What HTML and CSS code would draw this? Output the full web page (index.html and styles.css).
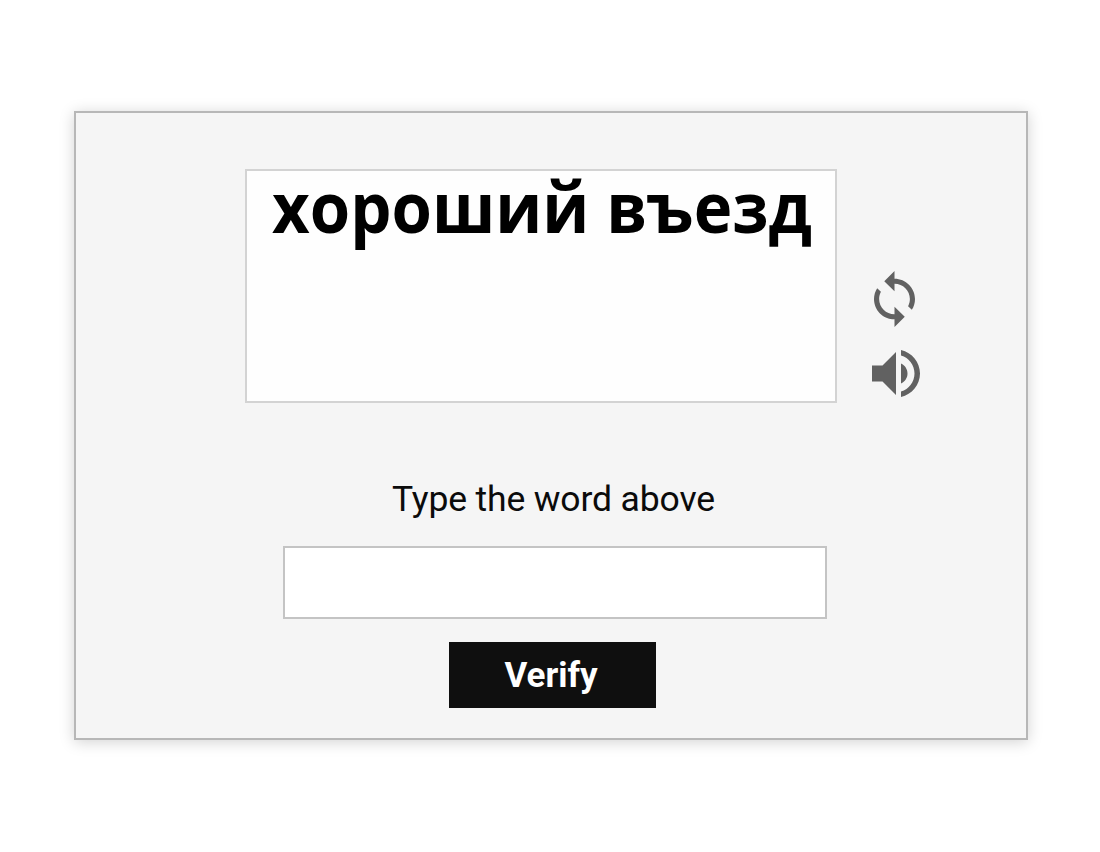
FILE: index.html
```html
<!DOCTYPE html>
<html lang="en">
<head>
<meta charset="utf-8">
<title>Verification</title>
<link rel="stylesheet" href="styles.css">
</head>
<body>
<main class="captcha">
  <div class="challenge">
    <div class="word" lang="ru"><span>хороший въезд</span></div>
    <div class="actions">
      <button class="icon" aria-label="Refresh"><svg class="refresh" viewBox="4 1 16 22" preserveAspectRatio="none"><path d="M12 4V1L8 5l4 4V6c3.31 0 6 2.69 6 6 0 1.01-.25 1.97-.7 2.8l1.46 1.46C19.54 15.03 20 13.57 20 12c0-4.42-3.58-8-8-8zm0 14c-3.31 0-6-2.69-6-6 0-1.01.25-1.97.7-2.8L5.24 7.74C4.46 8.97 4 10.43 4 12c0 4.42 3.58 8 8 8v3l4-4-4-4v3z"/></svg></button>
      <button class="icon" aria-label="Listen"><svg class="sound" viewBox="0 0 49 47"><path d="M1 15.500h10.500L25 2v43L11.500 31.500H1zM30 13.500c4 2 6.500 5.500 6.500 10s-2.500 8-6.500 10zM30 0c11 2.500 19 12.300 19 23.500S41 44.500 30 47v-5.500c8-2.300 13.500-9.500 13.500-18S38 7.800 30 5.500z"/></svg></button>
    </div>
  </div>
  <label class="prompt" for="answer">Type the word above</label>
  <input class="answer" id="answer" type="text">
  <button class="verify">Verify</button>
</main>
</body>
</html>
```
FILE: styles.css
```css
* { box-sizing: border-box; }
body {
  margin: 0;
  min-height: 852px;
  padding: 111px 0 0 74px;
  background: #fff;
  font-family: Roboto, sans-serif;
}
.captcha {
  display: flex;
  flex-direction: column;
  width: 954px;
  height: 629px;
  padding: 56px 0 0 169px;
  background: #f5f5f5;
  border: 2px solid #b7b7b7;
  box-shadow: 0 2px 14px rgba(0, 0, 0, .18);
}
.challenge { display: flex; height: 234px; }
.word {
  width: 592px;
  height: 234px;
  padding-left: 25px;
  background: #fefefe;
  border: 2px solid #d3d3d3;
  color: #000;
  font: 700 70px/70px "Open Sans", sans-serif;
  white-space: nowrap;
}
.word span {
  display: inline-block;
  transform: scaleX(.933);
  transform-origin: left;
}
.actions { display: flex; flex-direction: column; padding: 102px 0 0 34px; gap: 23px; }
.icon { display: flex; justify-content: center; width: 49px; padding: 0; border: 0; background: none; }
.icon svg { display: block; fill: #616161; }
.refresh { width: 41px; height: 56px; margin-right: 2px; }
.sound { width: 49px; height: 47px; }
.prompt {
  margin: 73px 0 0 147px;
  height: 48px;
  font-size: 35.500px;
  letter-spacing: -.14px;
  line-height: 47px;
  color: #0b0b0b;
}
.answer {
  width: 544px;
  height: 73px;
  margin: 22px 0 0 38px;
  padding: 0 16px;
  border: 2px solid #c4c4c4;
  border-radius: 0;
  background: #fff;
  font: 32px Roboto, sans-serif;
}
.verify {
  width: 207px;
  height: 66px;
  margin: 23px 0 0 204px;
  padding: 1px 3px 0 0;
  border: 0;
  background: #0f0f0f;
  color: #fff;
  font: 700 35px/65px Roboto, sans-serif;
}
```
